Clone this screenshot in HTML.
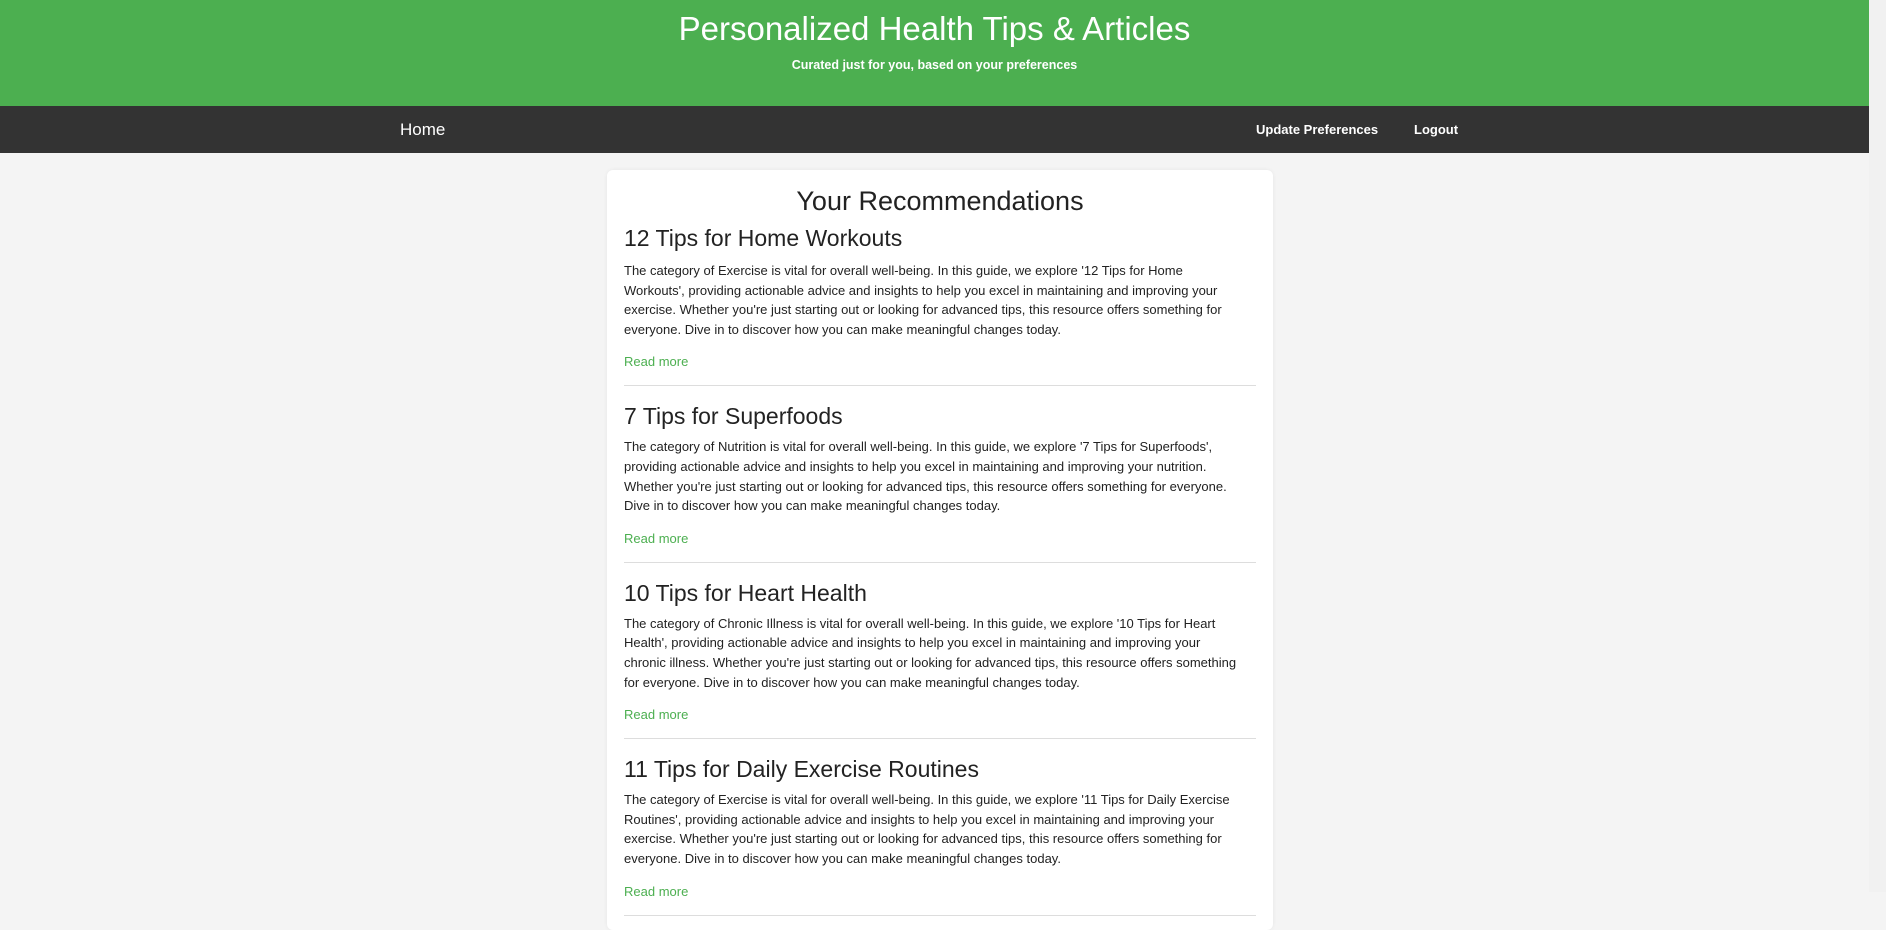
<!DOCTYPE html>
<html><head><meta charset="utf-8"><style>
*{box-sizing:border-box}
html,body{margin:0;padding:0;width:1886px;height:892px;overflow:hidden;background:#f4f4f4;font-family:"Liberation Sans",Arial,sans-serif;color:#222}
#page{position:absolute;left:0;top:0;width:1869px;height:892px}
#sb{position:absolute;right:0;top:0;width:17px;height:892px;background:#f1f1f1}
header{background:#4CAF50;height:106px;color:#fff;text-align:center;position:relative}
header h1{margin:0;position:absolute;left:0;right:0;top:10px;font-size:33px;font-weight:normal;line-height:38px}
header p{margin:0;position:absolute;left:0;right:0;top:58px;font-size:12.5px;font-weight:bold}
nav{background:#333;height:47px;position:relative;color:#fff}
nav .home{position:absolute;left:400px;top:14px;font-size:17px}
nav .r{position:absolute;top:16px;font-size:13px;font-weight:bold}
.card{position:absolute;left:607px;top:170px;width:666px;height:760px;background:#fff;border-radius:6px;padding:16px 34px 0 17px;box-shadow:0 0 4px rgba(0,0,0,.06)}
.card h1{margin:0;text-align:center;font-size:27px;font-weight:normal;line-height:30px;color:#222;margin-right:-17px}
.art h2{margin:9px 0 7px;font-size:23px;font-weight:normal;line-height:27px}
.art p{margin:0;font-size:13px;line-height:19.6px}
.art a{display:block;margin-top:13px;color:#4CAF50;font-size:13px;line-height:20px;text-decoration:none}
.art hr{border:0;border-top:1px solid #ddd;margin:13px -17px 17px 0}
.art:first-of-type h2{margin-top:9px;margin-bottom:9px}
</style></head><body>
<div id="page">
<header><h1>Personalized Health Tips &amp; Articles</h1><p>Curated just for you, based on your preferences</p></header>
<nav><span class="home">Home</span><span class="r" style="left:1256px">Update Preferences</span><span class="r" style="left:1414px">Logout</span></nav>
<div class="card">
<h1>Your Recommendations</h1>
<div class="art"><h2>12 Tips for Home Workouts</h2><p>The category of Exercise is vital for overall well-being. In this guide, we explore '12 Tips for Home Workouts', providing actionable advice and insights to help you excel in maintaining and improving your exercise. Whether you're just starting out or looking for advanced tips, this resource offers something for everyone. Dive in to discover how you can make meaningful changes today.</p><a>Read more</a><hr></div>
<div class="art"><h2>7 Tips for Superfoods</h2><p>The category of Nutrition is vital for overall well-being. In this guide, we explore '7 Tips for Superfoods', providing actionable advice and insights to help you excel in maintaining and improving your nutrition. Whether you're just starting out or looking for advanced tips, this resource offers something for everyone. Dive in to discover how you can make meaningful changes today.</p><a>Read more</a><hr></div>
<div class="art"><h2>10 Tips for Heart Health</h2><p>The category of Chronic Illness is vital for overall well-being. In this guide, we explore '10 Tips for Heart Health', providing actionable advice and insights to help you excel in maintaining and improving your chronic illness. Whether you're just starting out or looking for advanced tips, this resource offers something for everyone. Dive in to discover how you can make meaningful changes today.</p><a>Read more</a><hr></div>
<div class="art"><h2>11 Tips for Daily Exercise Routines</h2><p>The category of Exercise is vital for overall well-being. In this guide, we explore '11 Tips for Daily Exercise Routines', providing actionable advice and insights to help you excel in maintaining and improving your exercise. Whether you're just starting out or looking for advanced tips, this resource offers something for everyone. Dive in to discover how you can make meaningful changes today.</p><a>Read more</a><hr></div>
</div>
</div>
<div id="sb"></div>
</body></html>
